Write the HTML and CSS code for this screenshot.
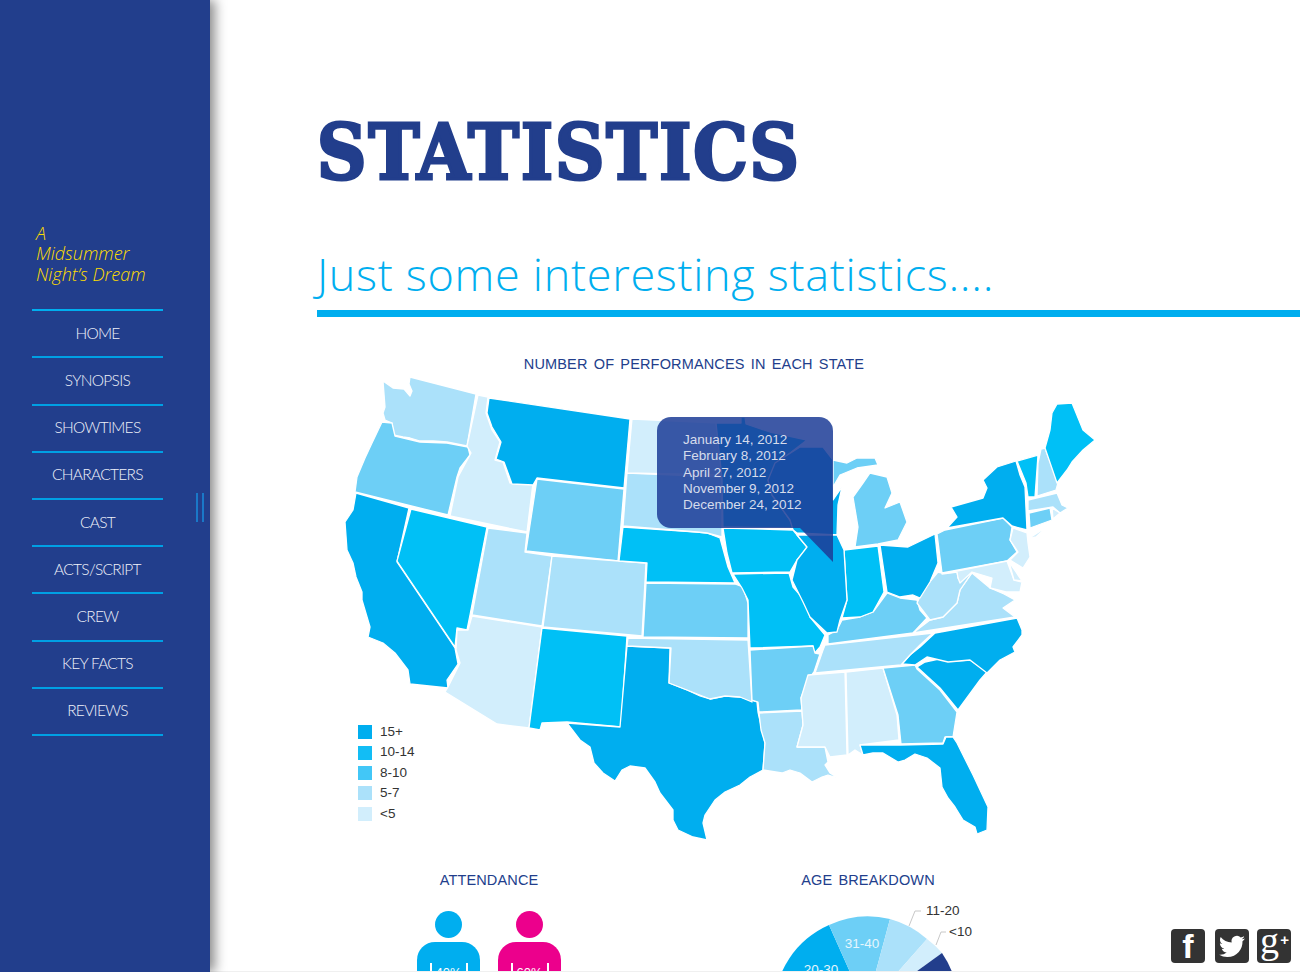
FILE: index.html
```html
<!DOCTYPE html>
<html lang="en">
<head>
<meta charset="utf-8">
<title>Statistics</title>
<link rel="stylesheet" href="styles.css">
</head>
<body>
<div class="page">
  <aside class="sidebar">
    <p class="show-title">A<br>Midsummer<br>Night’s Dream</p>
    <nav class="nav">
      <a>HOME</a><a>SYNOPSIS</a><a>SHOWTIMES</a><a>CHARACTERS</a><a>CAST</a><a>ACTS/SCRIPT</a><a>CREW</a><a>KEY FACTS</a><a>REVIEWS</a>
    </nav>
    <span class="scroll-handle"></span>
  </aside>
  <main class="main">
    <h1 class="title">STATISTICS</h1>
    <h2 class="subtitle">Just some interesting statistics....</h2>
    <section class="map-section">
      <h3 class="chart-title map-title">NUMBER OF PERFORMANCES IN EACH STATE</h3>
      <div class="map-wrap">
        <svg class="map" viewBox="340 370 770 480" width="770" height="480" aria-label="US map">
          <g class="states">
            <path class="c5" d="M383 381L393 388 404 389 410 396 412 391 409 384 410 377 476 394 467 446 447 442 433 441 420 441 410 438 403 437 393 435 392 423 385 420 383 413 385 407Z"/>
            <path class="c8" d="M382 422L392 423 395 436 420 442 447 443 468 447 470 455 460 468 457 477 448 515 355 492 357 477 365 458 372 443Z"/>
            <path class="c0" d="M478 395L488 397 486 413 492 430 500 442 495 460 503 462 510 483 533 483 527 532 450 516 458 477 471 453 467 446Z"/>
            <path class="c15" d="M489 398L630 419 624 488 537 478 533 485 512 484 504 462 496 459 501 442 492 427 487 413Z"/>
            <path class="c8" d="M537 479L624 489 618 561 526 551Z"/>
            <path class="c15" d="M356 493L409 508 397 562 455 648 458 664 447 680 448 688 410 684 408 670 395 653 383 643 368 637 370 627 362 600 362 592 356 577 353 563 347 550 345 522 353 510Z"/>
            <path class="c10" d="M411 509L487 527 470 615 467 630 457 628 455 647 397 561Z"/>
            <path class="c5" d="M488 528L527 533 525 552 552 556 542 626 472 615Z"/>
            <path class="c5" d="M552 556L646 563 642 636 543 627Z"/>
            <path class="c0" d="M472 616L542 627 529 728 497 724 445 692 448 687 460 663 456 650 457 630 468 630Z"/>
            <path class="c10" d="M542 628L627 636 621 727 567 722 542 723 540 730 529 728Z"/>
            <path class="c15" d="M627 646L670 648 669 683 687 690 700 696 710 699 725 696 740 697 757 702 758 712 765 743 763 770 750 777 740 785 725 792 715 800 705 815 703 823 707 840 693 837 678 830 673 820 673 810 660 793 655 782 645 768 630 766 622 770 615 781 603 773 594 763 590 747 580 740 567 723 620 727Z"/>
            <path class="c5" d="M628 638L748 640 752 702 740 697 725 696 710 699 687 690 669 683 671 648 627 646Z"/>
            <path class="c8" d="M646 583L735 584 743 587 748 603 748 638 643 637Z"/>
            <path class="c10" d="M623 527L697 532 707 533 720 538 728 567 735 583 646 582 647 563 619 561Z"/>
            <path class="c5" d="M627 473L722 477 722 537 707 533 697 532 623 526Z"/>
            <path class="c0" d="M632 419L720 423 722 475 627 473Z"/>
            <path class="c10" d="M716 423L741 423 741 417 745 417 746 424 770 432 807 440 777 463 768 480 772 495 790 520 793 528 723 527 722 478Z"/>
            <path class="c15" d="M775 463L800 447 823 447 833 460 833 500 842 487 838 505 837 535 797 533 793 530 790 520 772 495 768 480Z"/>
            <path class="c10" d="M723 528L793 530 807 547 803 553 797 560 790 572 732 573 727 553Z"/>
            <path class="c10" d="M733 574L789 573 793 587 807 603 810 617 825 635 820 647 813 655 813 646 750 648 748 600 742 588Z"/>
            <path class="c8" d="M750 650L813 646 815 653 820 654 814 672 808 680 801 698 802 710 759 712 758 702 752 700Z"/>
            <path class="c5" d="M759 713L802 711 803 725 797 747 825 747 828 762 825 765 830 773 838 778 828 775 822 777 812 782 800 773 790 770 782 773 763 770 765 743 761 730Z"/>
            <path class="c0" d="M808 675L845 672 847 755 830 757 825 747 797 747 803 725 801 698Z"/>
            <path class="c0" d="M846 672L883 668 897 715 899 740 860 745 863 755 855 750 848 755Z"/>
            <path class="c8" d="M883 668L915 665 917 669 940 690 957 712 953 737 945 737 943 743 901 744 898 715Z"/>
            <path class="c15" d="M860 745L900 745 943 744 946 737 953 737 957 743 973 775 988 807 987 830 977 834 975 827 963 820 955 807 948 798 942 787 940 768 927 758 915 754 905 760 898 762 883 753 873 753 863 755Z"/>
            <path class="c15" d="M917 667L925 662 948 657 953 661 970 660 987 672 980 680 958 710 940 688Z"/>
            <path class="c15" d="M935 633L1017 618 1022 630 1022 635 1013 647 1015 652 1000 660 993 667 987 673 970 660 948 662 927 657 915 665 902 664 910 655 920 647Z"/>
            <path class="c5" d="M825 645L933 633 920 645 910 655 901 665 815 673 823 650Z"/>
            <path class="c8" d="M828 635L837 630 842 620 860 617 873 612 887 593 900 598 917 600 920 610 927 618 913 633 828 644Z"/>
            <path class="c5" d="M913 633L930 620 943 617 957 603 960 590 972 573 990 588 1004 594 1015 600 1003 608 1015 617Z"/>
            <path class="c5" d="M942 573L957 572 958 578 970 571 971 574 960 590 957 603 943 617 930 620 917 603 923 590 938 572Z"/>
            <path class="c15" d="M880 545L908 547 935 534 938 563 930 582 920 598 913 595 900 597 887 592Z"/>
            <path class="c10" d="M844 550L878 546 884 592 873 612 860 617 842 618 847 600Z"/>
            <path class="c15" d="M797 535L837 535 844 550 847 600 840 620 837 632 827 633 810 617 803 602 792 580 797 560 807 547Z"/>
            <path class="c8" d="M833 460L847 463 857 458 875 458 878 465 857 468 840 475 833 487Z"/>
            <path class="c8" d="M870 473L887 477 892 493 885 508 900 502 907 522 898 540 878 544 855 547 858 527 853 497 863 483Z"/>
            <path class="c8" d="M937 534L945 530 1003 518 1012 527 1010 540 1017 552 1007 561 942 573Z"/>
            <path class="c15" d="M947 528L957 517 951 507 983 498 987 488 983 480 997 467 1016 461 1020 475 1025 487 1027 530 1012 526 1003 518Z"/>
            <path class="c10" d="M1017 461L1038 455 1035 497 1028 497 1026 483Z"/>
            <path class="c5" d="M1041 449L1045 448 1058 483 1056 490 1037 496 1038 463Z"/>
            <path class="c10" d="M1057 404L1072 403 1083 430 1095 440 1083 450 1072 462 1067 470 1057 483 1045 448 1050 430 1052 413Z"/>
            <path class="c5" d="M1028 500L1057 493 1062 505 1068 508 1060 513 1053 507 1028 511Z"/>
            <path class="c8" d="M1029 513L1050 508 1052 520 1030 528Z"/>
            <path class="c0" d="M1052 508L1060 513 1053 519Z"/>
            <path class="c0" d="M1013 528L1027 533 1028 543 1030 557 1023 568 1010 560 1018 552 1010 540Z"/>
            <path class="c0" d="M942 574L1007 561 1014 580 1022 582 1020 592 1006 592 990 588 992 578 972 572 960 583 958 578 957 572Z"/>
            <path class="c0" d="M1009 562L1016 572 1022 581 1014 580Z"/>
            <path class="c0" d="M1028 539L1048 526 1036 537Z"/>
          </g>
        </svg>
        <ul class="legend">
          <li><i class="sw s15"></i>15+</li>
          <li><i class="sw s10"></i>10-14</li>
          <li><i class="sw s8"></i>8-10</li>
          <li><i class="sw s5"></i>5-7</li>
          <li><i class="sw s0"></i>&lt;5</li>
        </ul>
        <div class="tip">January 14, 2012<br>February 8, 2012<br>April 27, 2012<br>November 9, 2012<br>December 24, 2012</div>
      </div>
    </section>
    <section class="lower">
      <div class="attendance">
        <h3 class="chart-title">ATTENDANCE</h3>
        <div class="people">
          <div class="person male"><span class="head"></span><span class="body"><b>40%</b></span></div>
          <div class="person female"><span class="head"></span><span class="body"><b>60%</b></span></div>
        </div>
      </div>
      <div class="age">
        <h3 class="chart-title">AGE BREAKDOWN</h3>
        <svg class="pie" viewBox="770 895 210 77" width="210" height="77">
          <path class="c15" d="M866 1008L829 925A92 92 0 0 0 774 1008Z"/>
          <path class="c8" d="M866 1008L829 925A92 92 0 0 1 890 919Z"/>
          <path class="c5" d="M866 1008L890 919A92 92 0 0 1 927 939Z"/>
          <path class="c0" d="M866 1008L927 939A92 92 0 0 1 942 953Z"/>
          <path class="navy" d="M866 1008L942 953A92 92 0 0 1 958 1008Z"/>
          <path class="leader" d="M909 926L915 911H921M936 945L941 932H946"/>
          <text class="pie-in" x="862" y="948" text-anchor="middle">31-40</text>
          <text class="pie-in" x="821" y="974" text-anchor="middle">20-30</text>
          <text class="pie-out" x="926" y="915">11-20</text>
          <text class="pie-out" x="949" y="936">&lt;10</text>
        </svg>
      </div>
    </section>
  </main>
  <div class="social">
    <a class="soc soc-f">f</a>
    <a class="soc"><svg viewBox="0 0 24 24" width="28" height="28"><path fill="#fff" d="M23 5.500c-.8.400-1.700.600-2.600.700.900-.600 1.700-1.400 2-2.500-.900.500-1.900.900-2.900 1.100a4.600 4.600 0 0 0-7.800 4.200C7.900 8.800 4.500 7 2.300 4.200c-1.200 2.100-.600 4.800 1.400 6.100-.700 0-1.400-.200-2.100-.600 0 2.200 1.600 4.100 3.700 4.600-.700.200-1.400.200-2.100.100.600 1.900 2.300 3.200 4.300 3.200A9.200 9.200 0 0 1 1 19.500 13 13 0 0 0 8 21.500c8.500 0 13.300-7.200 13-13.600.900-.600 1.600-1.400 2-2.400z"/></svg></a>
    <a class="soc soc-g">g<sup>+</sup></a>
  </div>
</div>
</body>
</html>
```
FILE: styles.css
```css
* { box-sizing: border-box; }
html, body { margin: 0; padding: 0; height: 972px; overflow: hidden; background: #fff; }
.page { display: flex; position: relative; width: 1300px; height: 972px; overflow: hidden; font-family: "Liberation Sans", Arial, sans-serif; }
.sidebar { position: relative; flex: 0 0 210px; height: 972px; background: #223e8c; padding: 223px 47px 0 32px; box-shadow: 5px 0 11px rgba(0,0,0,.45); z-index: 2; }
.show-title { margin: 0 0 25px 4px; font: italic 300 18px/20.4px "Open Sans", sans-serif; color: #ffdd00; }
.nav { display: flex; flex-direction: column; border-top: 2px solid #00aeef; }
.nav a { display: flex; align-items: center; justify-content: center; height: 47.2px; padding-bottom: 2px; border-bottom: 2px solid #00a0e4; color: #f0f2fa; font: 300 15.5px Lato, sans-serif; letter-spacing: -.7px; }
.scroll-handle { position: absolute; left: 196px; top: 493px; width: 8px; height: 29px; border-left: 2px solid #1a78c8; border-right: 2px solid #1a78c8; }
.main { flex: 1; height: 972px; padding: 118px 0 0 107px; border-bottom: 1px solid #f0f0f0; overflow: hidden; }
.title { margin: 0; height: 70px; font: 700 76px/70px "DejaVu Serif", serif; font-stretch: condensed; color: #223e8c; -webkit-text-stroke: 3px #223e8c; letter-spacing: 2px; white-space: nowrap; }
.subtitle { margin: 60px 0 0; height: 69px; border-bottom: 7px solid #00aeef; font: 300 45px/52px "Open Sans", sans-serif; color: #00aeef; letter-spacing: .7px; white-space: nowrap; }
.chart-title { margin: 0; height: 18px; font: 400 14.5px/18px "Liberation Sans", Arial, sans-serif; color: #223e8c; text-align: center; word-spacing: 2px; letter-spacing: .15px; }
.map-section { margin-top: 38px; }
.map-title { width: 754px; height: 15px; }
.map-wrap { position: relative; height: 480px; margin: 0 0 0 23px; }
.map { display: block; }
.states path { stroke: #fff; stroke-width: 1.3; stroke-linejoin: round; }
.c15 { fill: #00aeef; }
.c10 { fill: #00c0f6; }
.c8 { fill: #6dcff6; }
.c5 { fill: #abe1fa; }
.c0 { fill: #d2eefc; }
.navy { fill: #223e8c; }
.legend { position: absolute; left: 18px; top: 352px; margin: 0; padding: 0; list-style: none; font-size: 13.5px; line-height: 20.4px; color: #333; }
.legend li { display: flex; align-items: center; gap: 8px; height: 20.4px; }
.sw { width: 14px; height: 14px; }
.s15 { background: #00aeef; }
.s10 { background: #12bdf5; }
.s8 { background: #42c7f7; }
.s5 { background: #abe1fa; }
.s0 { background: #d2eefc; }
.tip { position: absolute; left: 317px; top: 47px; width: 176px; height: 111px; padding: 15px 0 0 26px; background: rgba(28,60,150,.85); border-radius: 14px 14px 0 14px; color: #d6dcec; font: 300 13.5px/16.3px "Liberation Sans", Arial, sans-serif; }
.tip::after { content: ""; position: absolute; right: 0; top: 100%; width: 0; height: 0; border-top: 34px solid rgba(28,60,150,.85); border-left: 33px solid transparent; }
.lower { display: flex; padding-top: 21px; }
.attendance { flex: 0 0 344px; }
.age { flex: 0 0 414px; }
.people { display: flex; gap: 18px; justify-content: center; margin-top: 22px; }
.person { display: flex; flex-direction: column; align-items: center; width: 63px; }
.head { width: 27px; height: 27px; border-radius: 50%; }
.body { display: block; width: 63px; height: 60px; margin-top: 4px; padding-top: 21px; border-radius: 18px 18px 0 0; text-align: center; color: #fff; font-size: 13px; }
.body b { display: inline-block; width: 38px; height: 40px; padding-top: 2px; border-left: 2px solid #fff; border-right: 2px solid #fff; font-weight: 400; }
.male .head, .male .body { background: #00aeef; }
.female .head, .female .body { background: #ec008c; }
.pie { display: block; margin: 6px 0 0 109px; }
.leader { fill: none; stroke: #c8c8c8; stroke-width: 1; }
.pie-in { fill: #e6f6fd; font-size: 13.5px; }
.pie-out { fill: #333; font-size: 13.5px; }
.social { position: absolute; right: 9px; bottom: 9px; display: flex; gap: 8px; z-index: 3; }
.soc { display: flex; align-items: center; justify-content: center; width: 34px; height: 34px; background: #333; border-radius: 4px; color: #fff; }
.soc-f { margin-right: 2px; font: 700 34px/34px "Liberation Sans", Arial, sans-serif; }
.soc-g { position: relative; justify-content: flex-start; padding: 0 0 12px 3px; font: 400 38px/28px "Liberation Serif", serif; }
.soc-g sup { position: absolute; top: 3px; right: 2px; font: 700 15px/1 "Liberation Sans", Arial, sans-serif; }
```
